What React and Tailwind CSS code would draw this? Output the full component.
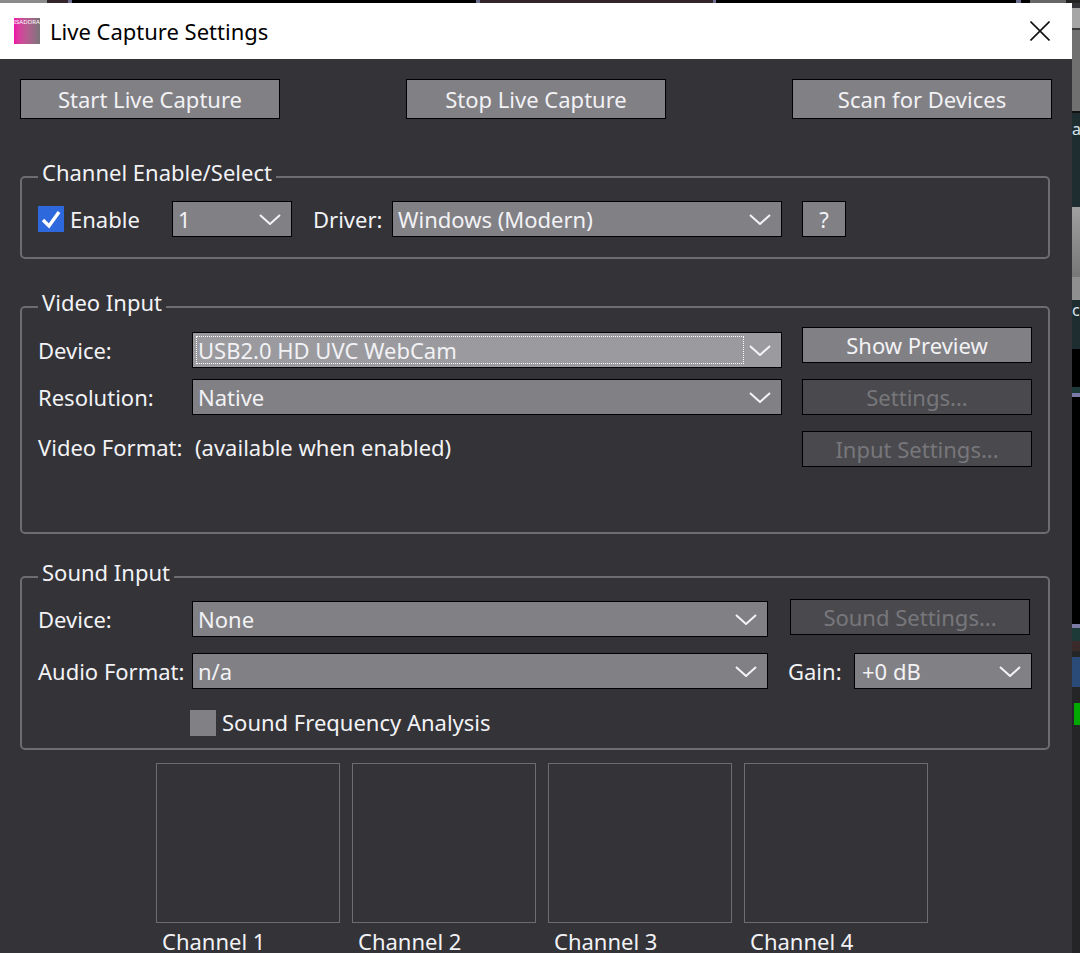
const Chevron = () => (
  <svg width="22" height="11" viewBox="0 0 22 11" fill="none" className="shrink-0">
    <polyline points="1,1 11,10 21,1" stroke="#f4f4f6" strokeWidth="2" />
  </svg>
);

const Select = ({ value, className = "", focused = false }) => (
  <div className={`relative flex h-[36px] items-center justify-between border border-black pl-[5px] pr-[10px] text-[#f2f2f5] ${focused ? "bg-[#9a9a9f]" : "bg-[#818085]"} ${className}`}>
    <span>{value}</span>
    <Chevron />
    {focused && <span className="absolute bottom-[3px] left-[3px] right-[37px] top-[3px] border border-dotted border-white" />}
  </div>
);

const Btn = ({ children, disabled = false, className = "" }) => (
  <button className={`flex items-center justify-center border border-black ${disabled ? "bg-[#4a4a4e] text-[#77777b]" : "bg-[#818085] text-[#f2f2f5]"} ${className}`}>
    {children}
  </button>
);

const Group = ({ title, className = "", children }) => (
  <div className={`relative w-[1030px] rounded-[5px] border-2 border-[#6d6d70] ${className}`}>
    <span className="absolute left-[16px] top-[-21px] bg-[#333338] px-[4px] leading-[30px]">{title}</span>
    {children}
  </div>
);

const StripBlock = ({ h, c, children }) => (
  <div className={`w-full shrink-0 overflow-hidden ${h} ${c}`}>{children}</div>
);

export default function App() {
  return (
    <div className="h-[953px] w-[1080px] overflow-hidden bg-[#252527] text-[22px] font-['Noto_Sans',sans-serif] text-[#f2f2f5]">
      <div className="flex h-[3px] w-full">
        <div className="w-[47px] bg-[#8a8a8a]" />
        <div className="w-[21px] bg-[#33262a]" />
        <div className="w-[4px] bg-[#6d6d90]" />
        <div className="w-[404px] bg-black" />
        <div className="w-[4px] bg-[#6d6d90]" />
        <div className="w-[233px] bg-[#33262a]" />
        <div className="w-[3px] bg-[#6d6d90]" />
        <div className="w-[300px] bg-black" />
        <div className="w-[5px] bg-[#6d6d90]" />
        <div className="w-[9px] bg-black" />
        <div className="w-[36px] bg-[#666666]" />
        <div className="flex-1 bg-[#222222]" />
      </div>
      <div className="flex h-[950px]">
        <div className="flex h-full w-[1072px] shrink-0 flex-col bg-[#333338]">
          <div className="flex h-[56px] shrink-0 items-center bg-white pl-[14px] pr-[22px] text-black">
            <div className="relative h-[26px] w-[26px] shrink-0 overflow-hidden bg-gradient-to-r from-[#ee0aa8] to-[#77747a]">
              <span className="absolute left-0 top-[1px] text-[6px] leading-[7px] text-white">ISADORA</span>
            </div>
            <span className="ml-[10px] flex-1">Live Capture Settings</span>
            <svg width="20" height="20" viewBox="0 0 20 20" fill="none">
              <path d="M0.5 0.5L19.5 19.5M19.5 0.5L0.5 19.5" stroke="#111" strokeWidth="1.6" />
            </svg>
          </div>

          <div className="flex flex-1 flex-col pl-[20px] pr-[20px] pt-[20px]">
            <div className="flex justify-between">
              <Btn className="h-[40px] w-[260px]">Start Live Capture</Btn>
              <Btn className="h-[40px] w-[260px]">Stop Live Capture</Btn>
              <Btn className="h-[40px] w-[260px]">Scan for Devices</Btn>
            </div>

            <Group title="Channel Enable/Select" className="mt-[57px] h-[83px]">
              <div className="flex items-center pl-[16px] pt-[23px]">
                <div className="flex h-[26px] w-[26px] items-center justify-center bg-[#2d68dc]">
                  <svg width="20" height="20" viewBox="0 0 20 20" fill="none">
                    <polyline points="2,11 8,17 18,3" stroke="white" strokeWidth="3.4" />
                  </svg>
                </div>
                <span className="ml-[6px] w-[102px]">Enable</span>
                <Select value="1" className="w-[120px]" />
                <span className="ml-[21px] w-[79px]">Driver:</span>
                <Select value="Windows (Modern)" className="w-[390px]" />
                <Btn className="ml-[20px] h-[36px] w-[44px]">?</Btn>
              </div>
            </Group>

            <Group title="Video Input" className="mt-[47px] h-[228px]">
              <div className="flex pl-[16px]">
                <div className="flex flex-col pt-[24px]">
                  <div className="flex items-center">
                    <span className="w-[154px]">Device:</span>
                    <Select value="USB2.0 HD UVC WebCam" focused className="w-[590px]" />
                  </div>
                  <div className="mt-[11px] flex items-center">
                    <span className="w-[154px]">Resolution:</span>
                    <Select value="Native" className="w-[590px]" />
                  </div>
                  <div className="mt-[16px] flex h-[32px] items-center">
                    <span className="w-[157px]">Video Format:</span>
                    <span>(available when enabled)</span>
                  </div>
                </div>
                <div className="ml-[20px] flex flex-col gap-[16px] pt-[19px]">
                  <Btn className="h-[36px] w-[230px]">Show Preview</Btn>
                  <Btn disabled className="h-[36px] w-[230px]">Settings...</Btn>
                  <Btn disabled className="h-[36px] w-[230px]">Input Settings...</Btn>
                </div>
              </div>
            </Group>

            <Group title="Sound Input" className="mt-[42px] h-[174px]">
              <div className="flex flex-col pl-[16px] pt-[23px]">
                <div className="flex h-[36px] items-start">
                  <span className="flex h-[36px] w-[154px] items-center">Device:</span>
                  <Select value="None" className="w-[576px]" />
                  <Btn disabled className="ml-[22px] mt-[-2px] h-[36px] w-[240px]">Sound Settings...</Btn>
                </div>
                <div className="mt-[16px] flex items-center">
                  <span className="w-[154px]">Audio Format:</span>
                  <Select value="n/a" className="w-[576px]" />
                  <span className="ml-[20px] w-[66px]">Gain:</span>
                  <Select value="+0 dB" className="w-[178px] pl-[7px]" />
                </div>
                <div className="ml-[152px] mt-[17px] flex items-center">
                  <div className="h-[26px] w-[26px] bg-[#818085]" />
                  <span className="ml-[6px]">Sound Frequency Analysis</span>
                </div>
              </div>
            </Group>

            <div className="ml-[136px] mt-[13px] flex gap-[12px]">
              {["Channel 1", "Channel 2", "Channel 3", "Channel 4"].map((c) => (
                <div key={c} className="flex w-[184px] flex-col">
                  <div className="h-[160px] border border-[#6d6d70]" />
                  <span className="pl-[6px] pt-[3px] leading-[30px]">{c}</span>
                </div>
              ))}
            </div>
          </div>
        </div>

        <div className="flex h-full flex-1 flex-col">
          <StripBlock h="h-[5px]" c="bg-[#333338]" />
          <StripBlock h="h-[20px]" c="bg-[#a5a5a5]" />
          <StripBlock h="h-[2px]" c="bg-[#3a3a3a]" />
          <StripBlock h="h-[81px]" c="bg-[#707070]" />
          <StripBlock h="h-[2px]" c="bg-[#111111]" />
          <StripBlock h="h-[94px]" c="bg-[#1e2e30] text-[#d8e4f0]"><span className="block pt-[6px] text-[16px] leading-[20px]">a</span></StripBlock>
          <StripBlock h="h-[70px]" c="bg-gradient-to-b from-[#a0a0a0] to-[#777777]" />
          <StripBlock h="h-[23px]" c="bg-[#8f8f8f]" />
          <StripBlock h="h-[49px]" c="bg-[#1e2e30] text-[#d8e4f0]"><span className="block pt-[0px] text-[16px] leading-[20px]">c</span></StripBlock>
          <StripBlock h="h-[38px]" c="bg-black" />
          <StripBlock h="h-[6px]" c="bg-[#1e3a38]" />
          <StripBlock h="h-[4px]" c="bg-[#7a7aa4]" />
          <StripBlock h="h-[227px]" c="bg-black" />
          <StripBlock h="h-[4px]" c="bg-[#7a7aa4]" />
          <StripBlock h="h-[13px]" c="bg-[#1e3a38]" />
          <StripBlock h="h-[10px]" c="bg-[#3b2a2a]" />
          <StripBlock h="h-[6px]" c="bg-[#252527]" />
          <StripBlock h="h-[30px]" c="bg-[#2a4a78]" />
          <StripBlock h="h-[16px]" c="bg-[#252527]" />
          <div className="ml-[2px] h-[22px] shrink-0 bg-[#00a800]" />
          <div className="flex-1 bg-[#252527]" />
        </div>
      </div>
    </div>
  );
}
